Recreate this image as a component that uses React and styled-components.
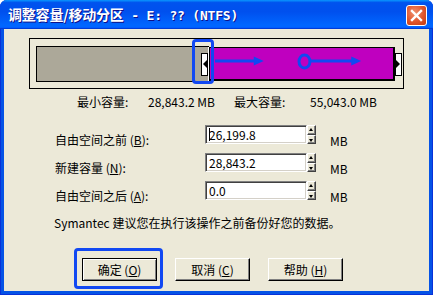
import React from 'react'
import styled, { createGlobalStyle } from 'styled-components'

const Global = createGlobalStyle`
  html, body {
    margin: 0;
    padding: 0;
    background: #ffffff;
  }
  * { box-sizing: border-box; }
`;

const BLUE = '#1148f2';

const App = () => {
  return (
    <>
      <Global />
      <Window>
        <TitleBar>
          <Title>调整容量/移动分区<Mono> - E: ?? (NTFS)</Mono></Title>
          <CloseButton>
            <svg width="13" height="13" viewBox="0 0 13 13">
              <path d="M2 2 L11 11 M11 2 L2 11" stroke="#fff" strokeWidth="2.4" strokeLinecap="square" />
            </svg>
          </CloseButton>
        </TitleBar>
        <Body>
          <Frame>
            <Bar>
              <Unallocated>
                <Handle $dir="left" />
              </Unallocated>
              <Partition>
                <svg width="100%" height="100%" viewBox="0 0 184 31" preserveAspectRatio="none">
                  <line x1="5" y1="13" x2="46" y2="13" stroke={BLUE} strokeWidth="3" />
                  <polygon points="44,8.5 54,13 44,17.5" fill={BLUE} />
                  <ellipse cx="95" cy="13.5" rx="5.5" ry="6.5" fill="none" stroke={BLUE} strokeWidth="3" />
                  <line x1="101" y1="13" x2="144" y2="13" stroke={BLUE} strokeWidth="3" />
                  <polygon points="142,8.5 152,13 142,17.5" fill={BLUE} />
                </svg>
              </Partition>
              <Handle $dir="right" />
            </Bar>
            <Highlight style={{ left: 162, top: 0, width: 22, height: 45 }} />
          </Frame>

          <Capacity>
            <span>最小容量:</span>
            <span>28,843.2 MB</span>
            <span>最大容量:</span>
            <span>55,043.0 MB</span>
          </Capacity>

          <Form>
            <Row>
              <Label>自由空间之前 (<u>B</u>):</Label>
              <Field>
                <Input $caret>26,199.8</Input>
                <Spinner><SpinButton $up /><SpinButton /></Spinner>
              </Field>
              <Unit>MB</Unit>
            </Row>
            <Row>
              <Label>新建容量 (<u>N</u>):</Label>
              <Field>
                <Input>28,843.2</Input>
                <Spinner><SpinButton $up /><SpinButton /></Spinner>
              </Field>
              <Unit>MB</Unit>
            </Row>
            <Row>
              <Label>自由空间之后 (<u>A</u>):</Label>
              <Field>
                <Input>0.0</Input>
                <Spinner><SpinButton $up /><SpinButton /></Spinner>
              </Field>
              <Unit>MB</Unit>
            </Row>
          </Form>

          <Note>Symantec 建议您在执行该操作之前备份好您的数据。</Note>

          <Buttons>
            <ButtonWrap>
              <Button $default>确定 (<u>O</u>)</Button>
              <Highlight style={{ left: -8, top: -10, width: 89, height: 41 }} />
            </ButtonWrap>
            <Button>取消 (<u>C</u>)</Button>
            <Button>帮助 (<u>H</u>)</Button>
          </Buttons>
        </Body>
      </Window>
    </>
  )
}

const Window = styled.div`
  width: 433px;
  height: 295px;
  display: flex;
  flex-direction: column;
  background: #0553e6;
  border-radius: 7px 7px 0 0;
  padding: 0 4px 4px 4px;
  box-shadow: inset 1px 0 #0831d9, inset -1px 0 #0831d9, inset 0 -1px #0831d9;
  font-family: "Noto Sans CJK SC", sans-serif;
  font-size: 12px;
  color: #000;
`;

const TitleBar = styled.div`
  height: 29px;
  margin: 0 -4px;
  padding: 0 6px 0 8px;
  display: flex;
  align-items: center;
  justify-content: space-between;
  border-radius: 7px 7px 0 0;
  background: linear-gradient(180deg, #0997ff 0%, #0053ee 9%, #0050ee 40%, #0066ff 86%, #0066ff 92%, #005bff 95%, #003dd7 97%, #003dd7 100%);
`;

const Title = styled.div`
  color: #fff;
  font-weight: bold;
  font-size: 14px;
  letter-spacing: -0.2px;
  text-shadow: 1px 1px #0f1089;
  white-space: nowrap;
  line-height: 16px;
  padding-top: 1px;
`;

const Mono = styled.span`
  font-family: "DejaVu Sans Mono", "Noto Sans CJK SC", monospace;
  font-size: 13px;
`;

const CloseButton = styled.div`
  width: 21px;
  height: 21px;
  border: 1px solid #fff;
  border-radius: 3px;
  background: radial-gradient(circle at 40% 35%, #f0926f 0%, #e0542b 55%, #c13b12 100%);
  display: flex;
  align-items: center;
  justify-content: center;
  margin-top: 1px;
`;

const Body = styled.div`
  flex: 1;
  background: #ece9d8;
  padding-top: 9px;
  display: flex;
  flex-direction: column;
`;

const Frame = styled.div`
  position: relative;
  width: 375px;
  height: 51px;
  margin-left: 25px;
  border: 1px solid #000;
  padding: 7px 1px 0 6px;
`;

const Bar = styled.div`
  height: 36px;
  display: flex;
  align-items: center;
`;

const Unallocated = styled.div`
  width: 173px;
  height: 36px;
  background: #aca899;
  border: 1px solid #000;
  border-right: none;
  display: flex;
  align-items: center;
  justify-content: flex-end;
  padding-right: 0;
  box-shadow: inset -1px 0 #fff;
`;

const Handle = styled.div`
  position: relative;
  flex: none;
  width: 7px;
  height: 23px;
  background: #fff;
  border: 1px solid #000;
  margin-right: ${({ $dir }) => ($dir === 'left' ? '1px' : '0')};

  &::after {
    content: '';
    position: absolute;
    top: 6px;
    ${({ $dir }) => ($dir === 'left' ? 'right: 0;' : 'left: 0;')}
    border-top: 4px solid transparent;
    border-bottom: 4px solid transparent;
    ${({ $dir }) => ($dir === 'left' ? 'border-right: 4px solid #000;' : 'border-left: 4px solid #000;')}
  }
`;

const Partition = styled.div`
  flex: 1;
  height: 34px;
  background: #bf00bf;
  border: 1px solid #000;
  border-bottom-width: 2px;
  border-right-width: 2px;
  display: flex;
`;

const Highlight = styled.div`
  position: absolute;
  border: 3px solid ${BLUE};
  border-radius: 4px;
  pointer-events: none;
`;

const Capacity = styled.div`
  display: grid;
  grid-template-columns: 71px 86px 76px auto;
  margin: 6px 0 0 73px;
  line-height: 14px;
  white-space: nowrap;
`;

const Form = styled.div`
  margin: 16px 0 0 51px;
  display: flex;
  flex-direction: column;
  gap: 9px;
`;

const Row = styled.div`
  height: 19px;
  display: flex;
  align-items: flex-end;
`;

const Label = styled.div`
  width: 150px;
  line-height: 12px;
  margin-bottom: -2px;
  white-space: nowrap;

  u { text-underline-offset: 1px; }
`;

const Field = styled.div`
  display: flex;
  height: 19px;
`;

const Input = styled.div`
  position: relative;
  width: 102px;
  height: 19px;
  background: #fff;
  border-top: 1px solid #808080;
  border-left: 1px solid #808080;
  border-bottom: 1px solid #fff;
  border-right: 1px solid #fff;
  box-shadow: inset 1px 1px #404040, inset -1px -1px #d4d0c8;
  padding: 1px 0 0 3px;
  line-height: 15px;
  font-size: 12px;

  &::before {
    content: '';
    display: ${({ $caret }) => ($caret ? 'block' : 'none')};
    position: absolute;
    left: 3px;
    top: 2px;
    width: 1px;
    height: 13px;
    background: #000;
  }
`;

const Spinner = styled.div`
  width: 9px;
  height: 19px;
  display: flex;
  flex-direction: column;
`;

const SpinButton = styled.div`
  position: relative;
  flex: 1;
  background: #ece9d8;
  border-top: 1px solid #fff;
  border-left: 1px solid #fff;
  border-right: 1px solid #404040;
  border-bottom: 1px solid #404040;
  box-shadow: inset -1px -1px #808080;

  &::after {
    content: '';
    position: absolute;
    left: 1px;
    top: ${({ $up }) => ($up ? '2px' : '3px')};
    border-left: 2.5px solid transparent;
    border-right: 2.5px solid transparent;
    ${({ $up }) => ($up ? 'border-bottom: 3px solid #000;' : 'border-top: 3px solid #000;')}
  }
`;

const Unit = styled.div`
  margin-left: 14px;
  line-height: 12px;
  margin-bottom: -3px;
`;

const Note = styled.div`
  margin: 16px 0 0 50px;
  line-height: 14px;
  white-space: nowrap;
`;

const Buttons = styled.div`
  margin: 28px 0 0 78px;
  display: flex;
  gap: 18px;
`;

const ButtonWrap = styled.div`
  position: relative;
  display: flex;
`;

const Button = styled.div`
  width: 75px;
  height: 23px;
  display: flex;
  align-items: center;
  justify-content: center;
  background: #ece9d8;
  border-top: 1px solid ${({ $default }) => ($default ? '#000' : '#fff')};
  border-left: 1px solid ${({ $default }) => ($default ? '#000' : '#fff')};
  border-right: 1px solid #000;
  border-bottom: 1px solid #000;
  box-shadow: ${({ $default }) =>
    $default ? 'inset 1px 1px #fff, inset -1px -1px #808080' : 'inset -1px -1px #808080'};
  line-height: 14px;
  white-space: nowrap;

  u { text-underline-offset: 1px; }
`;

export default App
